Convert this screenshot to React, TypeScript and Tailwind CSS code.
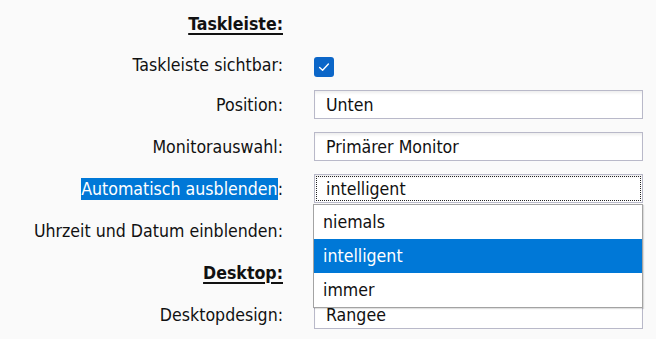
import { FC, ReactNode } from "react";

interface RowProps {
  label: ReactNode;
  children?: ReactNode;
  className?: string;
}

// one line of the settings form: right-aligned label, control on the right
const Row: FC<RowProps> = ({ label, children, className = "h-[29px]" }) => (
  <div className={`grid grid-cols-[283px_329px] gap-x-[31px] ${className}`}>
    <div className="flex items-center justify-end whitespace-nowrap pt-[1px]">{label}</div>
    <div className="relative flex items-center">{children}</div>
  </div>
);

const Heading: FC<{ text: string }> = ({ text }) => (
  <span className="font-bold underline underline-offset-[3px] decoration-[1.5px]">{text}</span>
);

const TextBox: FC<{ value: string; focused?: boolean }> = ({ value, focused }) => (
  <div className="relative flex h-[29px] w-full items-center border border-[#b9b9c9] bg-white pl-[11px] pt-[1px] shadow-[inset_0_3px_3px_-1px_rgba(0,0,0,0.07)]">
    {focused && (
      <div className="pointer-events-none absolute inset-[1px] border border-dotted border-[#222]" />
    )}
    <span className="relative">{value}</span>
  </div>
);

const options = ["niemals", "intelligent", "immer"];

export default function App() {
  return (
    <div
      className="h-[339px] w-[656px] overflow-hidden bg-[#fafafa] text-[17.6px] text-[#111]"
      style={{ fontFamily: '"DejaVu Sans Condensed", "DejaVu Sans", Tahoma, sans-serif' }}
    >
      <div className="flex flex-col gap-[13px] pt-[9px]">
        <Row label={<Heading text="Taskleiste:" />} />

        <Row label="Taskleiste sichtbar:" className="h-[26px]">
          <div className="mt-[4px] flex h-[20px] w-[20px] items-center justify-center rounded-[3px] bg-[#0b66c8]">
            <svg width="14" height="14" viewBox="0 0 14 14" fill="none">
              <path d="M2.6 7.4 L5.6 10.2 L11.4 4" stroke="white" strokeWidth="1.4" strokeLinecap="round" strokeLinejoin="round" />
            </svg>
          </div>
        </Row>

        <Row label="Position:">
          <TextBox value="Unten" />
        </Row>

        <Row label="Monitorauswahl:">
          <TextBox value="Primärer Monitor" />
        </Row>

        <Row
          label={
            <span>
              <span className="bg-[#0078d7] py-[1px] text-white">Automatisch ausblenden</span>:
            </span>
          }
        >
          <TextBox value="intelligent" focused />
          <div className="absolute left-[-1px] top-[30px] z-10 w-[330px] border border-[#a3a3a3] bg-white shadow-[1px_1px_1px_rgba(0,0,0,0.12)]">
            {options.map((o) => (
              <div
                key={o}
                className={`flex h-[34px] items-center pl-[9px] pt-[1px] ${
                  o === "intelligent" ? "bg-[#0078d7] text-white" : ""
                }`}
              >
                {o}
              </div>
            ))}
          </div>
        </Row>

        <Row label="Uhrzeit und Datum einblenden:" />

        <Row label={<Heading text="Desktop:" />} />

        <Row label="Desktopdesign:">
          <TextBox value="Rangee" />
        </Row>
      </div>
    </div>
  );
}
